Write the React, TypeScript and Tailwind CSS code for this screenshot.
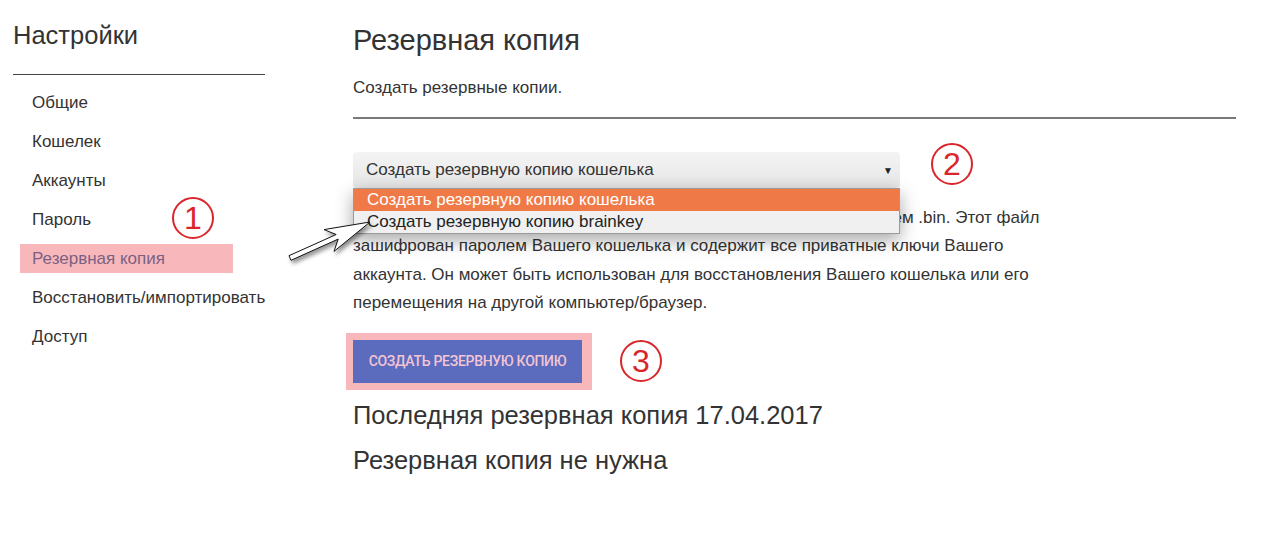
import React from "react";

const menu = [
  "Общие",
  "Кошелек",
  "Аккаунты",
  "Пароль",
  "Резервная копия",
  "Восстановить/импортировать",
  "Доступ",
];

function Circled({ n, className }: { n: string; className: string }) {
  return (
    <div
      className={
        "absolute w-[42px] h-[42px] rounded-full border-[2px] border-[#d9262b] flex items-center justify-center text-[#d9262b] text-[32px] leading-none font-['Liberation_Sans',sans-serif] " +
        className
      }
    >
      <span className="-mt-[1px]">{n}</span>
    </div>
  );
}

export default function App() {
  return (
    <div className="relative w-[1280px] h-[549px] bg-white overflow-hidden text-[#333] font-['Liberation_Sans',Arial,sans-serif]">
      <div className="flex">
        <aside className="w-[265px] pl-[13px] shrink-0">
          <h1 className="pt-[20px] text-[25.5px] leading-[30px] text-[#333]">Настройки</h1>
          <div className="mt-[24px] h-px bg-[#444]" />
          <ul className="mt-[13px] flex flex-col gap-[10px]">
            {menu.map((m) => (
              <li
                key={m}
                className={
                  "ml-[7px] w-[213px] h-[29px] pl-[12px] flex items-center text-[17px] whitespace-nowrap " +
                  (m === "Резервная копия" ? "bg-[#f8b8bb] text-[#7b6184]" : "text-[#333]")
                }
              >
                {m}
              </li>
            ))}
          </ul>
        </aside>

        <main className="ml-[88px] w-[883px] shrink-0">
          <h2 className="pt-[23px] text-[29px] leading-[34px] text-[#333]">Резервная копия</h2>
          <p className="mt-[21px] text-[17px] leading-[20px]">Создать резервные копии.</p>
          <div className="mt-[19px] h-[2px] bg-[#7a7a7a]" />

          <div className="relative mt-[33px] w-[547px]">
            <div className="h-[36px] rounded-[4px] bg-gradient-to-b from-[#f4f4f4] to-[#e6e6e6] flex items-center justify-between pl-[13px] pr-[7px] text-[17px] text-[#333]">
              <span>Создать резервную копию кошелька</span>
              <span className="text-[10px] text-[#222]">▼</span>
            </div>
            <div className="absolute left-0 top-[36px] w-[547px] border border-[#9a9a9a] bg-[#f0f0f0] shadow-[0_6px_18px_rgba(0,0,0,0.35)] z-10">
              <div className="h-[22px] bg-[#f07a47] text-white text-[17px] leading-[22px] pl-[13px]">
                Создать резервную копию кошелька
              </div>
              <div className="h-[22px] bg-[#f0f0f0] text-[#222] text-[17px] leading-[22px] pl-[13px]">
                Создать резервную копию brainkey
              </div>
            </div>
          </div>

          <p className="mt-[16px] text-[17px] leading-[28.3px] text-[#333] whitespace-nowrap">
            Будет создан файл резервной копии Вашего кошелька с расширением .bin. Этот файл
            <br />
            зашифрован паролем Вашего кошелька и содержит все приватные ключи Вашего
            <br />
            аккаунта. Он может быть использован для восстановления Вашего кошелька или его
            <br />
            перемещения на другой компьютер/браузер.
          </p>

          <div className="mt-[16px] -ml-[7px] inline-block bg-[#f8b8bb] pl-[7px] pr-[10px] py-[7px]">
            <button className="h-[43px] w-[229px] bg-[#5b6bbe] text-[#f3c4d4] text-[14px] font-medium font-['Roboto',sans-serif] uppercase tracking-[-0.3px]">
              Создать резервную копию
            </button>
          </div>

          <div className="mt-[10px] text-[25.5px] leading-[30px] text-[#333]">Последняя резервная копия 17.04.2017</div>
          <div className="mt-[15px] text-[25.5px] leading-[30px] text-[#333]">Резервная копия не нужна</div>
        </main>
      </div>

      <Circled n="1" className="left-[172px] top-[197px]" />
      <Circled n="2" className="left-[931px] top-[143px]" />
      <Circled n="3" className="left-[620px] top-[340px]" />

      <svg
        className="absolute left-[270px] top-[200px] z-20 drop-shadow-[2px_3px_2px_rgba(0,0,0,0.45)]"
        width="120"
        height="70"
        viewBox="0 0 120 70"
      >
        <polygon
          points="100,22 54,29.6 66.2,34.5 19,55.7 21,60.3 68.2,39.1 64,51.4"
          fill="#fff"
          stroke="#111"
          strokeWidth="1"
          strokeLinejoin="miter"
        />
      </svg>
    </div>
  );
}
